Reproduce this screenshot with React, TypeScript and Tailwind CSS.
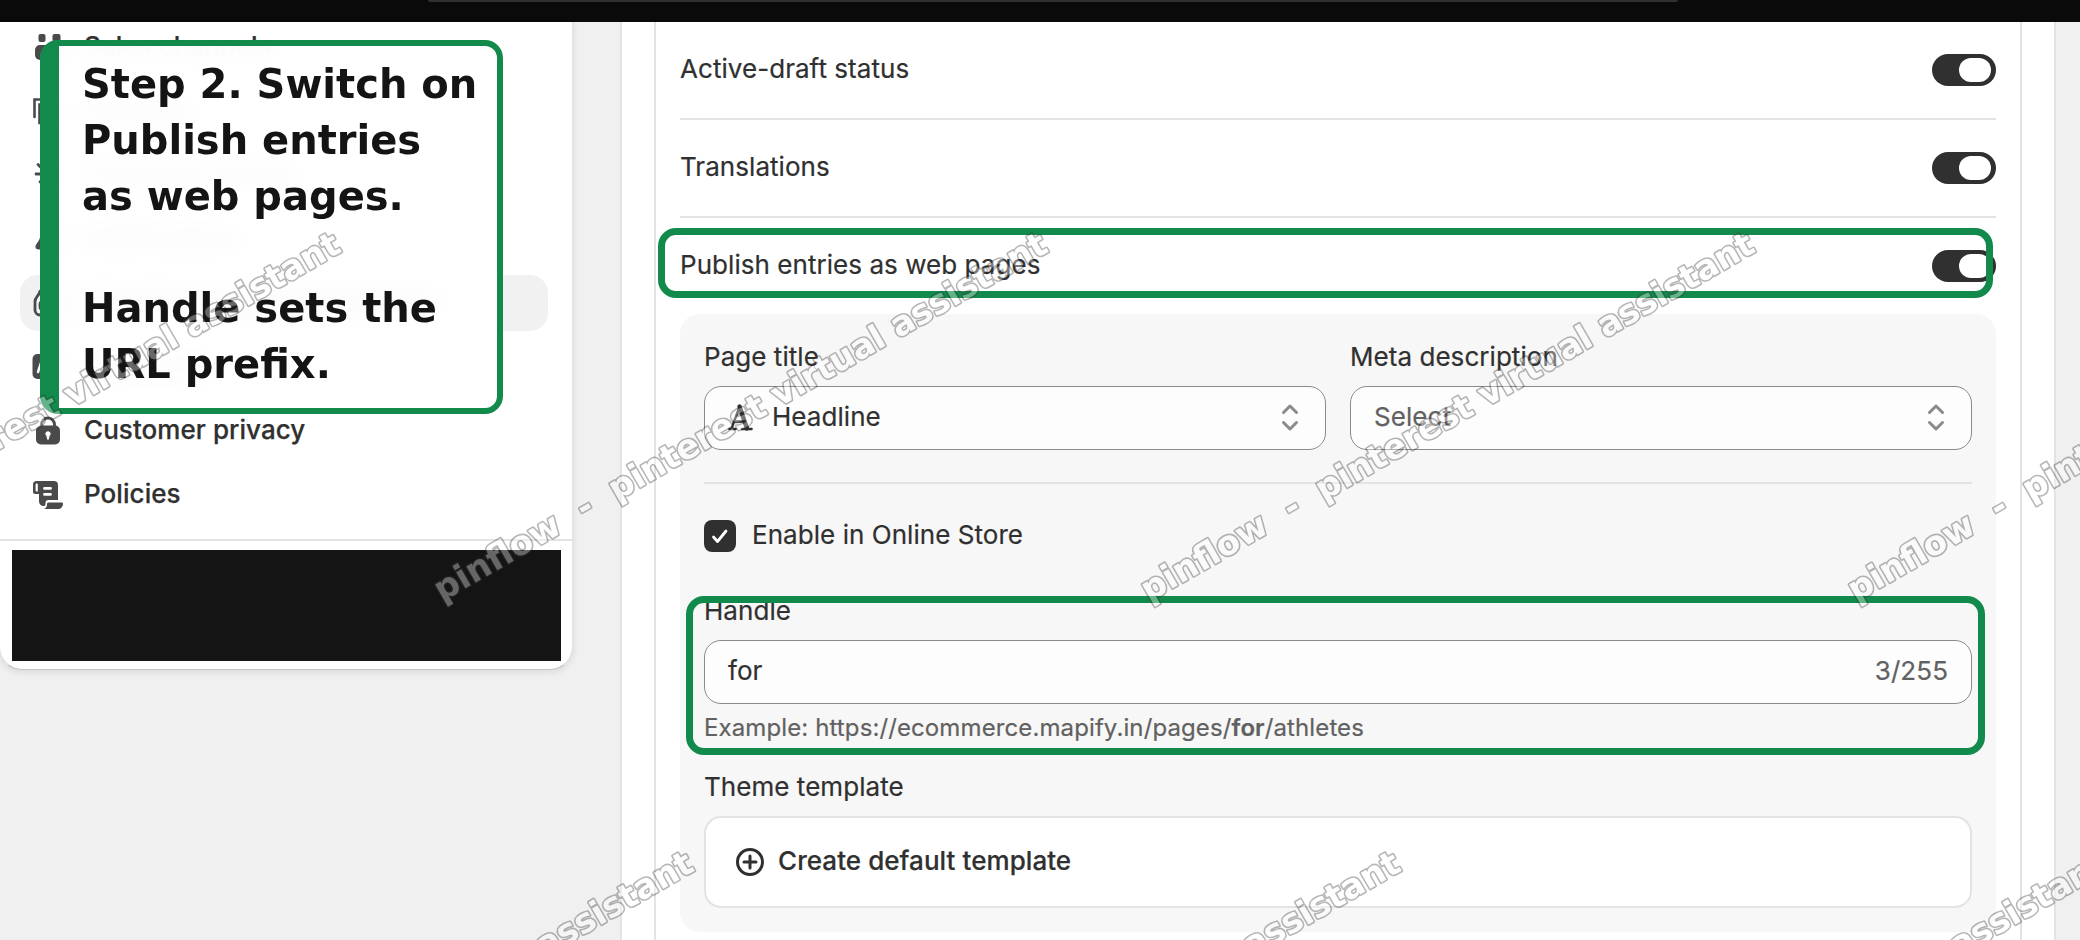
import React from 'react';

interface IconProps {
  className?: string;
}

const ChannelsIcon: React.FC<IconProps> = ({ className }) => (
  <svg viewBox="0 0 40 40" className={className} fill="currentColor">
    <rect x="10.500" y="7" width="7" height="8" rx="2" />
    <rect x="24.500" y="7" width="8" height="8" rx="2" />
    <rect x="7" y="18" width="26" height="15" rx="5" />
  </svg>
);

const DomainsIcon: React.FC<IconProps> = ({ className }) => (
  <svg viewBox="0 0 40 40" className={className} fill="none" stroke="currentColor" strokeWidth={2.6} strokeLinecap="round">
    <path d="M6.500 26V8.500h18" />
    <path d="M11.500 32V13.500h20V32z" />
  </svg>
);

const EventsIcon: React.FC<IconProps> = ({ className }) => (
  <svg viewBox="0 0 40 40" className={className} fill="none" stroke="currentColor" strokeWidth={2.8} strokeLinecap="round">
    <path d="M8 19h6M10 9.500l4 4M12 27l3-4M20 7v5M28 10l-3 4M20 18l12 5-5 3-3 6z" />
  </svg>
);

const BellIcon: React.FC<IconProps> = ({ className }) => (
  <svg viewBox="0 0 40 40" className={className} fill="currentColor">
    <path d="M20 6a7.500 7.500 0 0 0-7.500 7.500c0 5-1 7.500-4 11.500-2 2.500-1 5.500 2 5.500h19c3 0 4-3 2-5.500-3-4-4-6.500-4-11.500A7.500 7.500 0 0 0 20 6z" />
  </svg>
);

const DataIcon: React.FC<IconProps> = ({ className }) => (
  <svg viewBox="0 0 40 40" className={className} fill="none" stroke="currentColor" strokeWidth={2.8} strokeLinecap="round">
    <path d="M12 8.500c-1.500 5-5 5.500-5 10V27a5 5 0 0 0 5 5h16a5 5 0 0 0 5-5v-8.500c0-4.500-3.500-5-5-10z" />
    <rect x="12" y="18" width="16" height="9" rx="3" />
  </svg>
);

const LanguagesIcon: React.FC<IconProps> = ({ className }) => (
  <svg viewBox="0 0 40 40" className={className}>
    <rect x="4.500" y="7" width="26" height="25" rx="5" fill="currentColor" />
    <path d="M10 25l4-12 4 12" fill="none" stroke="white" strokeWidth={2.5} strokeLinecap="round" />
  </svg>
);

const LockIcon: React.FC<IconProps> = ({ className }) => (
  <svg viewBox="0 0 40 40" className={className}>
    <path d="M13.500 16v-2.500a6.500 6.500 0 0 1 13 0V16" fill="none" stroke="currentColor" strokeWidth={2.8} />
    <rect x="8" y="14.500" width="24" height="19" rx="5" fill="currentColor" />
    <path d="M20 20.200a2.700 2.700 0 0 0-1.500 4.900l.5 2.700a1 1 0 0 0 2 0l.5-2.700a2.700 2.700 0 0 0-1.500-4.900z" fill="white" />
  </svg>
);

const PoliciesIcon: React.FC<IconProps> = ({ className }) => (
  <svg viewBox="0 0 40 40" className={className} fill="currentColor">
    <path
      fillRule="evenodd"
      d="M8.500 6H26a4 4 0 0 1 4 4v15H20.500a3 3 0 0 0-3 3v1c0 1-.6 2-1.500 2-3 0-5-2-5-5v-7H7.500A2.500 2.500 0 0 1 5 16.500v-7A3.500 3.500 0 0 1 8.500 6zM8.800 8.500c-.7 0-1.200.5-1.200 1.200v6c0 .4.3.7.7.7h1.500V9.500c0-.6-.4-1-1-1zM16.500 12a1.400 1.400 0 0 0 0 2.800h6a1.400 1.400 0 0 0 0-2.800zm0 6a1.400 1.400 0 0 0 0 2.800h6a1.400 1.400 0 0 0 0-2.800z"
    />
    <path d="M20.500 27.500h13.300c.7 0 1.200.5 1.200 1.200 0 3-2.200 5.300-5 5.300H15.500c2.500-.5 3.500-2.200 3.500-5 0-.9.600-1.500 1.500-1.500z" />
  </svg>
);

const UpDownIcon: React.FC<IconProps> = ({ className }) => (
  <svg viewBox="0 0 40 40" className={className} fill="none" stroke="currentColor" strokeWidth={3} strokeLinecap="round" strokeLinejoin="round">
    <path d="M13.500 14.500L20 8l6.500 6.500M13.500 24.500L20 31l6.500-6.500" />
  </svg>
);

const TextFieldIcon: React.FC<IconProps> = ({ className }) => (
  <svg viewBox="0 0 40 40" className={className} fill="none" stroke="currentColor" strokeLinecap="round" strokeLinejoin="round">
    <path d="M11.500 30.500L19.500 9" strokeWidth={2.4} />
    <path d="M19.500 8.500L27 30.500" strokeWidth={4.4} />
    <path d="M14 23.500h10" strokeWidth={2.4} />
    <path d="M9.500 31h6M22 31h9.500" strokeWidth={2.6} />
  </svg>
);

const PlusCircleIcon: React.FC<IconProps> = ({ className }) => (
  <svg viewBox="0 0 40 40" className={className} fill="none" stroke="currentColor" strokeWidth={3} strokeLinecap="round">
    <circle cx="20" cy="20" r="12.500" />
    <path d="M20 14v12M14 20h12" />
  </svg>
);

const NAV_ITEMS = [
  { label: 'Sales channels', Icon: ChannelsIcon, active: false },
  { label: 'Domains', Icon: DomainsIcon, active: false },
  { label: 'Customer events', Icon: EventsIcon, active: false },
  { label: 'Notifications', Icon: BellIcon, active: false },
  { label: 'Metafields and metaobjects', Icon: DataIcon, active: true },
  { label: 'Languages', Icon: LanguagesIcon, active: false },
  { label: 'Customer privacy', Icon: LockIcon, active: false },
  { label: 'Policies', Icon: PoliciesIcon, active: false },
];

const OPTIONS = ['Active-draft status', 'Translations', 'Publish entries as web pages'];

const WATERMARKS = [
  [-265, 602],
  [442, 602],
  [1149, 602],
  [1856, 602],
  [88, 1221],
  [795, 1221],
  [1502, 1221],
];

const Toggle = () => (
  <button role="switch" aria-checked="true" className="flex h-8 w-16 items-center justify-end rounded-full bg-[#303030] pr-[5px]">
    <span className="h-6 w-8 rounded-full bg-white" />
  </button>
);

const Sidebar = () => (
  <aside className="-ml-0.5 flex h-[648px] w-[576px] shrink-0 flex-col overflow-hidden rounded-b-[24px] border-x-2 border-b border-[#e3e3e3] border-b-[#c4c4c4] bg-white shadow-[0_3px_6px_rgba(0,0,0,0.08)]">
    <nav className="-mt-[3px] flex h-[520px] shrink-0 flex-col gap-2 pl-5 pr-6">
      {NAV_ITEMS.map(({ label, Icon, active }) => (
        <a
          key={label}
          className={`flex h-14 shrink-0 items-center rounded-[18px] pl-2 text-[26px] font-medium tracking-[0.06px] text-[#303030] [-webkit-text-stroke:0.25px_#303030] ${active ? 'bg-[#f1f1f1]' : ''}`}
        >
          <Icon className="h-10 w-10 text-[#4a4a4a]" />
          <span className="ml-4 pb-[3px]">{label}</span>
        </a>
      ))}
    </nav>
    <div className="border-t-2 border-[#e3e3e3] pl-3 pt-[9px]">
      <div className="h-[111px] w-[549px] bg-[#141414]" />
    </div>
  </aside>
);

interface SelectProps {
  label: string;
  children: React.ReactNode;
}

const SelectField: React.FC<SelectProps> = ({ label, children }) => (
  <div className="flex-1">
    <div className="h-10 leading-[38px]">{label}</div>
    <button className="mt-2 flex h-16 w-full items-center rounded-[17px] border-[1.3px] border-[#8a8a8a] bg-[#fdfdfd] px-[15px] tracking-[0.05px]">
      {children}
      <UpDownIcon className="ml-auto h-10 w-10 text-[#8a8a8a]" />
    </button>
  </div>
);

const PublishPanel = () => (
  <div className="h-[618px] rounded-[20px] bg-[#f7f7f7] p-6">
    <div className="flex gap-6">
      <SelectField label="Page title">
        <TextFieldIcon className="h-10 w-10" />
        <span className="ml-3 pb-[3px]">Headline</span>
      </SelectField>
      <SelectField label="Meta description">
        <span className="ml-2 pb-[3px] text-[#616161]">Select</span>
      </SelectField>
    </div>

    <div className="my-8 h-0.5 bg-[#e3e3e3]" />

    <label className="flex h-10 items-center gap-4">
      <span className="flex h-8 w-8 items-center justify-center rounded-lg bg-[#303030]">
        <svg viewBox="0 0 32 32" className="h-8 w-8" fill="none" stroke="white" strokeWidth={2.8} strokeLinecap="round" strokeLinejoin="round">
          <path d="M9.500 17l4 4.500 8.500-10.500" />
        </svg>
      </span>
      <span className="pb-[3px]">Enable in Online Store</span>
    </label>

    <div className="mt-9 h-10 leading-[38px]">Handle</div>
    <div className="mt-2 flex h-16 items-center justify-between rounded-[17px] border-[1.3px] border-[#8a8a8a] bg-[#fdfdfd] px-[23px] pb-[3px]">
      <span>for</span>
      <span className="text-[#616161]">3/255</span>
    </div>
    <p className="mt-2 h-8 text-[24px] leading-8 tracking-[0.11px] text-[#616161]">
      Example: https://ecommerce.mapify.in/pages/<b className="font-semibold">for</b>/athletes
    </p>

    <div className="mt-6 h-10 leading-[38px]">Theme template</div>
    <button className="mt-2 flex h-[92px] w-full items-center rounded-[17px] border-2 border-[#e3e3e3] bg-white pl-6 font-medium tracking-[0.06px]">
      <PlusCircleIcon className="h-10 w-10" />
      <span className="ml-2 pb-[3px]">Create default template</span>
    </button>
  </div>
);

// Callout and highlight frames that sit above the page
const Annotations = () => (
  <>
    <div className="absolute left-[40px] top-[40px] h-[374px] w-[463px] rounded-[18px] border-[6px] border-l-[19px] border-[#128a4c] bg-white/95 pl-[23px] pt-[10px] font-['DejaVu_Sans',sans-serif] text-[40px] font-bold leading-[56px] tracking-normal text-[#141414] backdrop-blur-md">
      Step 2. Switch on
      <br />
      Publish entries
      <br />
      as web pages.
      <br />
      <br />
      Handle sets the
      <br />
      URL prefix.
    </div>
    <div className="absolute left-[658px] top-[228px] h-[70px] w-[1335px] rounded-[18px] border-[7px] border-[#128a4c]" />
    <div className="absolute left-[686px] top-[596px] h-[159px] w-[1299px] rounded-[18px] border-[7px] border-[#128a4c]" />
  </>
);

// Fill is painted over the stroke, so only the outer half of the outline shows
const Watermark = () => (
  <svg className="pointer-events-none absolute inset-0 opacity-[0.35]" width="2080" height="940">
    {WATERMARKS.map(([x, y]) => (
      <text
        key={`${x}-${y}`}
        transform={`translate(${x} ${y}) rotate(-30)`}
        fontFamily="DejaVu Sans, sans-serif"
        fontWeight="700"
        fontSize="34"
        xmlSpace="preserve"
        paintOrder="stroke"
        strokeLinejoin="round"
        fill="white"
        stroke="#303030"
        strokeWidth="3.2"
      >
        pinflow  -  pinterest virtual assistant
      </text>
    ))}
  </svg>
);

const App: React.FC = () => {
  return (
    <div className="relative flex h-[940px] w-[2080px] flex-col overflow-hidden bg-[#f0f0f0] font-['Inter',sans-serif] text-[26px] font-normal text-[#303030]">
      <header className="flex h-[22px] shrink-0 bg-[#0a0a0a] pl-[428px]">
        <div className="h-0.5 w-[1250px] rounded-b-sm bg-[#303030]" />
      </header>
      <div className="flex items-start">
        <Sidebar />
        <main className="ml-[46px] h-[918px] w-[1436px] shrink-0 border-x-2 border-[#e3e3e3] bg-white px-8 tracking-[0.05px] [-webkit-text-stroke:0.2px_currentColor]">
          <section className="h-full border-x-2 border-[#e3e3e3] px-6">
            <div className="divide-y-2 divide-[#e3e3e3]">
              {OPTIONS.map((option) => (
                <div key={option} className="flex h-[98px] items-center justify-between last:h-24">
                  <span className="pb-[3px]">{option}</span>
                  <Toggle />
                </div>
              ))}
            </div>
            <PublishPanel />
          </section>
        </main>
      </div>
      <Annotations />
      <Watermark />
    </div>
  );
};

export default App;
